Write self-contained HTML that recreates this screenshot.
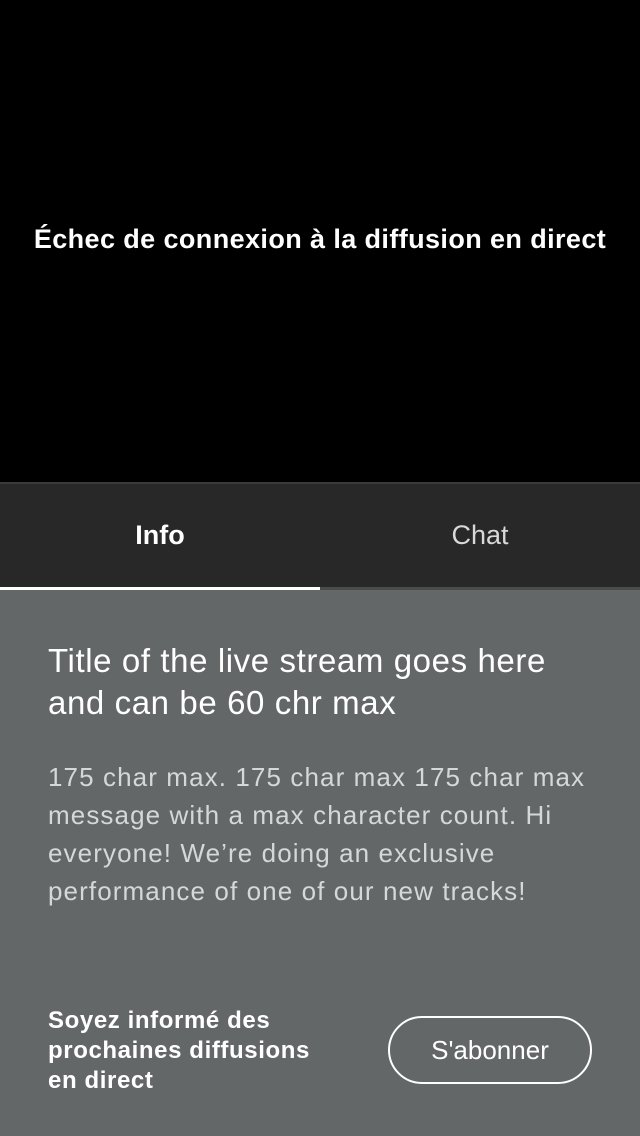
<!DOCTYPE html>
<html><head><meta charset="utf-8"><style>
*{margin:0;padding:0;box-sizing:border-box}
body{width:640px;height:1136px;background:#646767;font-family:"Liberation Sans",sans-serif;position:relative;overflow:hidden;color:#fff}
.video{position:absolute;left:0;top:0;width:640px;height:482px;background:#000}
.err{position:absolute;top:224px;width:640px;text-align:center;font-size:27px;font-weight:bold;letter-spacing:0.4px;white-space:nowrap}
.line{position:absolute;top:482px;left:0;width:640px;height:2px;background:#3a3a3a}
.tabs{position:absolute;top:484px;left:0;width:640px;height:103px;background:#282828}
.tab{position:absolute;top:36px;width:320px;text-align:center;font-size:27px}
.ul{position:absolute;top:587px;height:3px}
.t{position:absolute;left:48px;top:640px;font-size:33px;line-height:42px;white-space:nowrap;letter-spacing:0.6px}
.d{position:absolute;left:48px;top:758px;font-size:26px;line-height:38px;white-space:nowrap;color:#d6d8d8;letter-spacing:1.1px}
.s{position:absolute;left:48px;top:1006px;font-size:24px;line-height:30px;font-weight:bold;white-space:nowrap;letter-spacing:0.6px}
.b{position:absolute;left:388px;top:1016px;width:204px;height:68px;border:2px solid #fff;border-radius:34px;text-align:center;line-height:64px;font-size:26px}
</style></head><body>
<div class="video"><div class="err">Échec de connexion à la diffusion en direct</div></div>
<div class="line"></div>
<div class="tabs"><div class="tab" style="left:0;font-weight:bold">Info</div><div class="tab" style="left:320px;color:#d8d8d8">Chat</div></div>
<div class="ul" style="left:0;width:320px;background:#fff"></div>
<div class="ul" style="left:320px;width:320px;background:#4a4c4c"></div>
<div class="t">Title of the live stream goes here<br>and can be 60 chr max</div>
<div class="d">175 char max. 175 char max 175 char max<br>message with a max character count. Hi<br>everyone! We’re doing an exclusive<br>performance of one of our new tracks!</div>
<div class="s">Soyez informé des<br>prochaines diffusions<br>en direct</div>
<div class="b">S'abonner</div>
</body></html>
